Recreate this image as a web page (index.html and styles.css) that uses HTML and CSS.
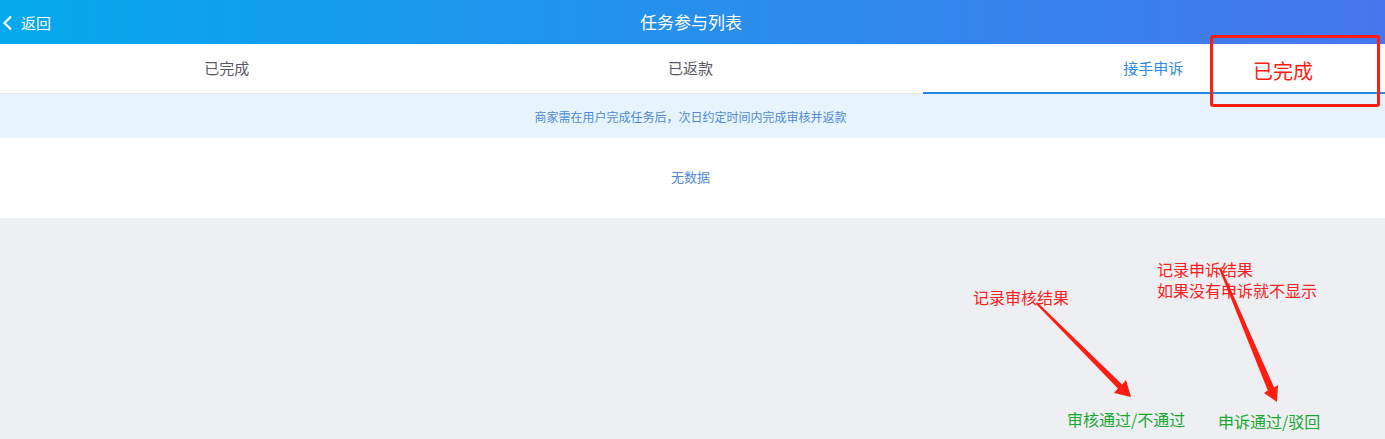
FILE: index.html
```html
<!DOCTYPE html>
<html lang="zh-CN">
<head>
<meta charset="utf-8">
<title>任务参与列表</title>
<link rel="stylesheet" href="styles.css">
</head>
<body>
<div class="page">
  <header class="header">
    <div class="back">
      <svg class="back-icon" width="12" height="16" viewBox="0 0 12 16"><polyline points="9,1.5 2.5,8 9,14.5" fill="none" stroke="#fff" stroke-width="2.2"/></svg>
      <span>返回</span>
    </div>
    <h1 class="title">任务参与列表</h1>
  </header>
  <nav class="tabs">
    <div class="tab t1">已完成</div>
    <div class="tab t2">已返款</div>
    <div class="tab active">接手申诉</div>
  </nav>
  <div class="notice">商家需在用户完成任务后，次日约定时间内完成审核并返款</div>
  <div class="empty">无数据</div>
  <div class="rest"></div>

  <div class="anno-box"><span>已完成</span></div>
  <div class="anno anno-audit">记录审核结果</div>
  <div class="anno anno-appeal"><div>记录申诉结果</div><div>如果没有申诉就不显示</div></div>
  <div class="anno-green g1">审核通过/不通过</div>
  <div class="anno-green g2">申诉通过/驳回</div>
  <svg class="arrows" width="1385" height="439" viewBox="0 0 1385 439">
    <polygon fill="#ff1d12" points="1037,302 1122.1,384.4 1126,380 1131,397 1114,393 1117.9,388.6 1036,304"/>
    <polygon fill="#ff1d12" points="1221,267.5 1274.2,387.6 1278,385 1277,402 1264,393 1267.8,390.4 1219,268.5"/>
  </svg>
</div>
</body>
</html>
```
FILE: styles.css
```css
html, body {
  margin: 0;
  padding: 0;
  height: 100%;
}
body {
  font-family: "Noto Sans CJK SC", "Noto Sans", sans-serif;
  background: #eeeff3;
}
.page {
  position: relative;
  width: 1385px;
  height: 439px;
  display: flex;
  flex-direction: column;
  overflow: hidden;
}
.header {
  height: 44px;
  flex: none;
  background: linear-gradient(to right, #05a9ee, #2a8cec 55%, #4677ec);
  display: flex;
  align-items: center;
  justify-content: center;
  position: relative;
  color: #fff;
}
.back {
  position: absolute;
  left: 2px;
  top: 0;
  height: 44px;
  display: flex;
  align-items: center;
  gap: 7px;
  font-size: 15px;
}
.back-icon {
  display: block;
  margin-top: 1px;
}
.title {
  margin: 0 0 0 -3px;
  font-size: 17px;
  font-weight: normal;
  line-height: 44px;
}
.tabs {
  height: 49px;
  flex: none;
  display: grid;
  grid-template-columns: repeat(3, 1fr);
  background: #fff;
  border-bottom: 1px solid #e3e5e8;
}
.tab {
  display: flex;
  align-items: center;
  justify-content: center;
  font-size: 15px;
  color: #555a62;
  position: relative;
  padding-bottom: 2px;
  box-sizing: border-box;
}
.tab.t1 {
  padding-right: 8px;
}
.tab.t2 {
  padding-right: 4px;
}
.tab.active {
  color: #2d8be8;
  padding-right: 2px;
}
.tab.active::after {
  content: "";
  position: absolute;
  left: 0;
  right: 0;
  bottom: -1px;
  height: 2px;
  background: #1f8ceb;
}
.notice {
  height: 44px;
  flex: none;
  background: #e7f4fe;
  display: flex;
  align-items: center;
  justify-content: center;
  font-size: 12px;
  color: #4f8ad8;
  padding-right: 4px;
  box-sizing: border-box;
}
.empty {
  height: 80px;
  flex: none;
  background: #fff;
  display: flex;
  align-items: center;
  justify-content: center;
  font-size: 13px;
  color: #4f8ad8;
  padding: 0 4px 4px 0;
  box-sizing: border-box;
}
.rest {
  flex: 1;
  background: #eeeff3;
}
.anno-box {
  position: absolute;
  left: 1210px;
  top: 35px;
  width: 164px;
  height: 66px;
  border: 3px solid #ff1d12;
  border-radius: 3px;
  display: flex;
  align-items: center;
  justify-content: flex-start;
}
.anno-box span {
  font-size: 20px;
  color: #ff1d12;
  margin-left: 40px;
  margin-bottom: 2px;
}
.anno {
  position: absolute;
  color: #ff2020;
  font-size: 16px;
  line-height: 21px;
}
.anno-audit {
  left: 973px;
  top: 287px;
}
.anno-appeal {
  left: 1157px;
  top: 259px;
}
.anno-green {
  position: absolute;
  color: #1aa832;
  font-size: 16px;
  line-height: 21px;
}
.g1 {
  left: 1067px;
  top: 409px;
}
.g2 {
  left: 1218px;
  top: 411px;
}
.arrows {
  position: absolute;
  left: 0;
  top: 0;
  pointer-events: none;
}
```
